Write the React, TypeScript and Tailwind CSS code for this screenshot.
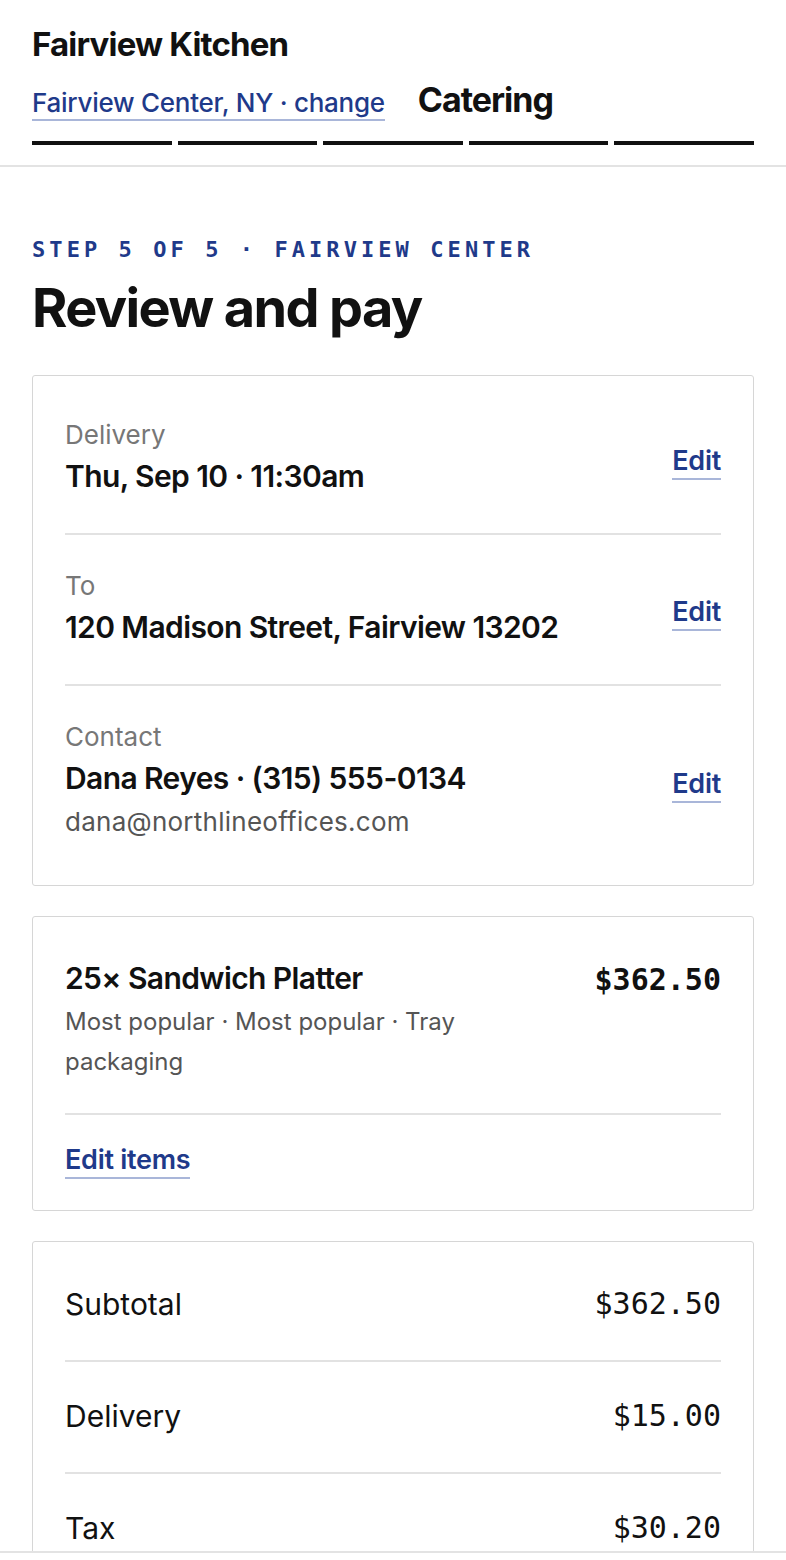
const sans = "font-['Inter','Noto_Sans',sans-serif]";
const mono = "font-['DejaVu_Sans_Mono','Liberation_Mono',monospace]";

const details = [
  { label: "Delivery", value: "Thu, Sep 10 · 11:30am" },
  { label: "To", value: "120 Madison Street, Fairview 13202" },
  { label: "Contact", value: "Dana Reyes · (315) 555-0134", sub: "dana@northlineoffices.com" },
];

const totals = [
  { label: "Subtotal", amount: "$362.50" },
  { label: "Delivery", amount: "$15.00" },
  { label: "Tax", amount: "$30.20" },
  { label: "Total", amount: "$407.70" },
];

function EditLink({ children, className = "" }: { children: React.ReactNode; className?: string }) {
  return (
    <a
      href="#"
      className={`text-[27px] leading-[32px] font-semibold tracking-[-0.01em] text-[#1f3a8a] border-b-2 border-[#a9b6d9] pb-[1px] ${className}`}
    >
      {children}
    </a>
  );
}

export default function App() {
  return (
    <div className={`${sans} min-h-screen bg-white text-[#111]`}>
      <header className="px-8 pt-[25px] pb-5 border-b-2 border-[#e3e3e3]">
        <div className="text-[33px] leading-[38px] font-bold tracking-[-0.025em]">Fairview Kitchen</div>
        <div className="mt-[19px] flex items-baseline gap-[33px]">
          <a
            href="#"
            className="text-[26px] leading-[30px] font-medium tracking-[-0.01em] text-[#1f3a8a] border-b-2 border-[#a9b6d9] pb-[1px]"
          >
            Fairview Center, NY · change
          </a>
          <span className="text-[34px] leading-[36px] font-bold tracking-[-0.03em]">Catering</span>
        </div>
        <div className="mt-[20px] grid grid-cols-5 gap-[6px]">
          {[0, 1, 2, 3, 4].map((i) => (
            <div key={i} className="h-[4px] bg-[#111]" />
          ))}
        </div>
      </header>

      <main className="px-8 pt-[69px] pb-10">
        <div className={`${mono} text-[22px] leading-[28px] font-bold tracking-[0.185em] text-[#1f3a8a]`}>
          STEP 5 OF 5 · FAIRVIEW CENTER
        </div>
        <h1 className="mt-[14px] text-[54px] leading-[60px] font-bold tracking-[-0.03em]">Review and pay</h1>

        <section className="mt-[37px] border border-[#d6d6d6] rounded-[3px] px-8 py-2">
          {details.map((d, i) => (
            <div
              key={d.label}
              className={`flex items-center justify-between pt-[33px] pb-[34px] ${i > 0 ? "border-t-2 border-[#e2e2e2]" : ""}`}
            >
              <div>
                <div className="text-[26px] leading-[36px] text-[#777]">{d.label}</div>
                <div className="text-[30px] leading-[46px] font-semibold tracking-[-0.02em]">{d.value}</div>
                {d.sub && <div className="text-[26px] leading-[42px] tracking-[0.01em] text-[#555]">{d.sub}</div>}
              </div>
              <EditLink className="mt-[9px]">Edit</EditLink>
            </div>
          ))}
        </section>

        <section className="mt-[30px] border border-[#d6d6d6] rounded-[3px] px-8 py-2">
          <div className="pt-[33px] pb-[31px] border-b-2 border-[#e2e2e2]">
            <div className="flex items-start justify-between gap-6">
              <div className="max-w-[420px]">
                <div className="text-[30px] leading-[40px] font-semibold tracking-[-0.02em]">25× Sandwich Platter</div>
                <div className="mt-[4px] text-[24px] leading-[40px] text-[#555]">
                  Most popular · Most popular · Tray packaging
                </div>
              </div>
              <div className={`${mono} text-[30px] leading-[44px] font-bold`}>$362.50</div>
            </div>
          </div>
          <div className="pt-[29px] pb-[26px]">
            <EditLink>Edit items</EditLink>
          </div>
        </section>

        <section className="mt-[30px] border border-[#d6d6d6] rounded-[3px] px-8 py-2">
          {totals.map((t, i) => (
            <div
              key={t.label}
              className={`flex items-center justify-between pt-[34px] pb-[36px] ${i > 0 ? "border-t-2 border-[#e2e2e2]" : ""}`}
            >
              <span className={`text-[30px] leading-[40px] ${t.label === "Total" ? "font-bold" : ""}`}>{t.label}</span>
              <span className={`${mono} text-[30px] leading-[40px] ${t.label === "Total" ? "font-bold" : ""}`}>
                {t.amount}
              </span>
            </div>
          ))}
        </section>
      </main>

      <div className="fixed inset-x-0 bottom-0 h-[9px] bg-white border-t-2 border-[#e3e3e3]" />
    </div>
  );
}
